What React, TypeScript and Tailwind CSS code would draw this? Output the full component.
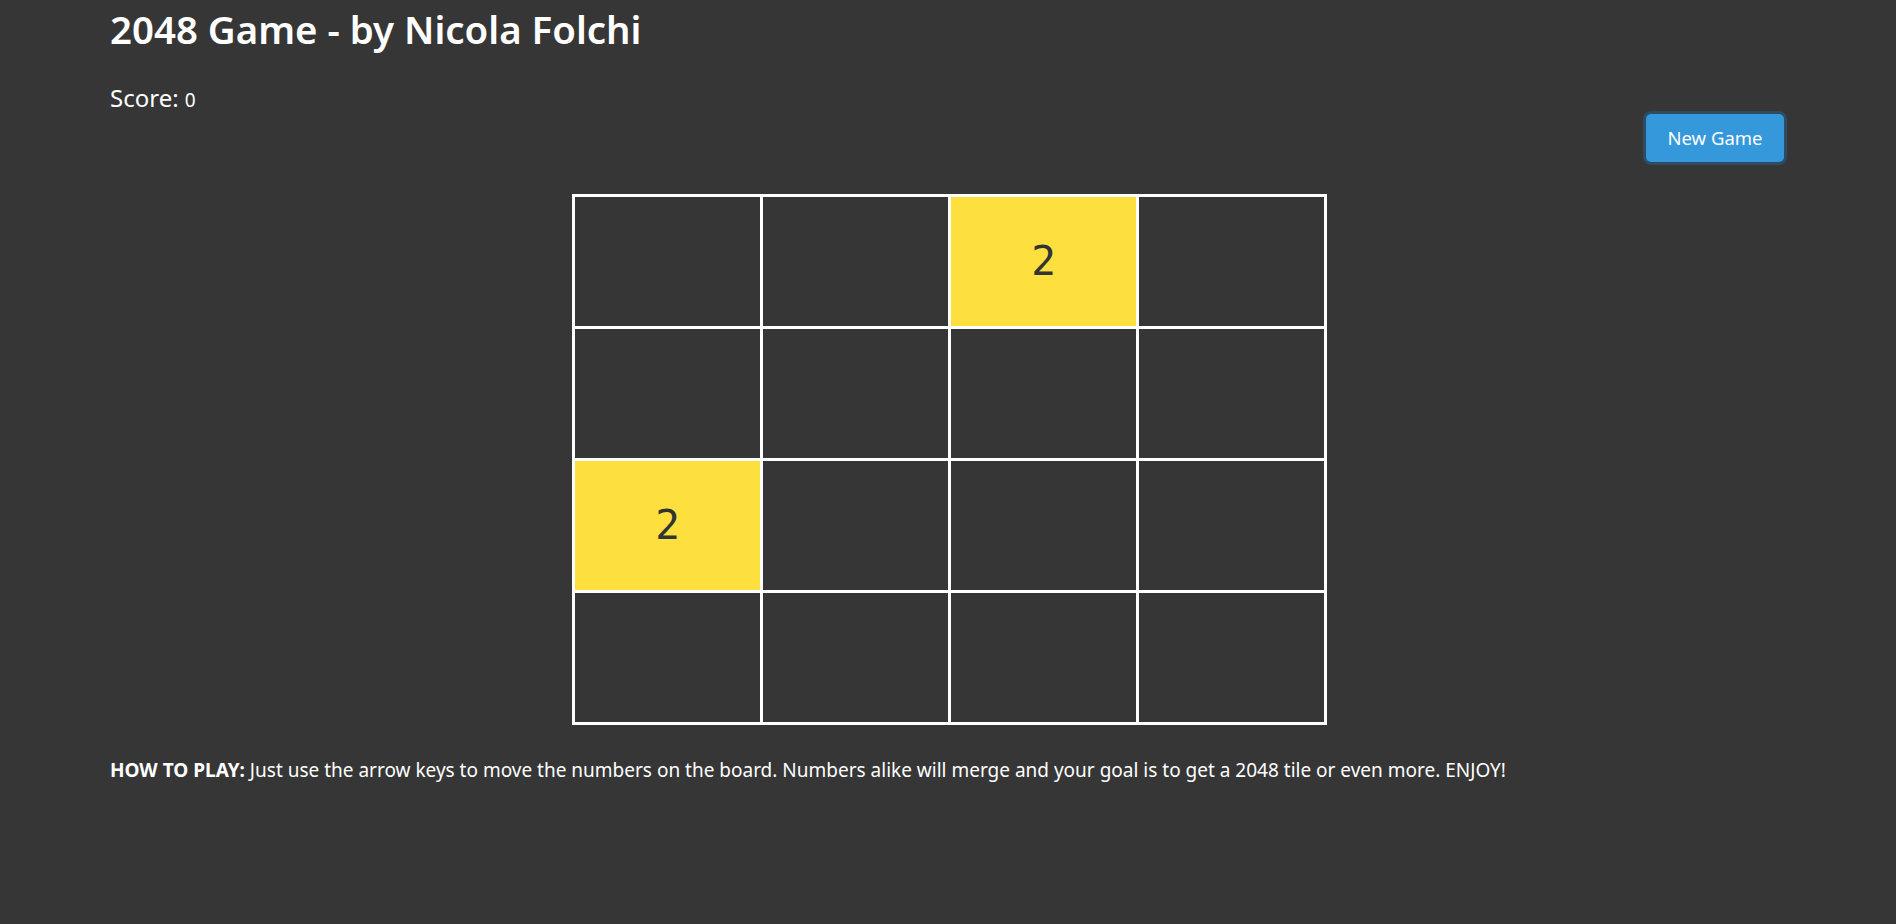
import { useState } from 'react';

type Board = number[][];

const initialBoard: Board = [
    [0, 0, 2, 0],
    [0, 0, 0, 0],
    [2, 0, 0, 0],
    [0, 0, 0, 0],
];

function Tile({ value }: { value: number }) {
    return (
        <div
            className={`flex items-center justify-center w-[185px] h-[129px] text-[41px] leading-none text-[#333333] ${value ? 'bg-[#fde03d]' : 'bg-[#363636]'}`}
            style={{ fontFamily: '"DejaVu Sans Mono", monospace' }}
        >
            {value ? value : ''}
        </div>
    );
}

export default function App() {
    const [board] = useState<Board>(initialBoard);
    const [score] = useState(0);

    return (
        <div
            className="min-h-[924px] bg-[#363636] text-white px-[110px]"
            style={{ fontFamily: '"Noto Sans", "Open Sans", sans-serif' }}
        >
            {/* Header */}
            <h1 className="text-[38.4px] font-semibold leading-[1.2] pt-[6px]">
                2048 Game - by Nicola Folchi
            </h1>
            <div className="mt-[32px] text-[24px] leading-[1.2]">
                Score: <span className="text-[19px]">{score}</span>
            </div>

            {/* Controls */}
            <div className="flex justify-end mt-[1px] pr-[2px]">
                <button className="w-[138px] h-[48px] rounded-[5px] bg-[#3498db] text-white text-[18.5px] ring-[3px] ring-[#2d4b61]">
                    New Game
                </button>
            </div>

            {/* Board */}
            <div className="flex justify-center mt-[32px] pl-[3px]">
                <div className="grid grid-cols-4 gap-[3px] p-[3px] bg-white">
                    {board.map((row, r) =>
                        row.map((v, c) => <Tile key={`${r}-${c}`} value={v} />)
                    )}
                </div>
            </div>

            {/* How to play */}
            <p className="mt-[31px] text-[19px] leading-[1.5]">
                <span className="font-bold">HOW TO PLAY:</span> Just use the arrow keys to move the numbers on the board. Numbers alike will merge and your goal is to get a 2048 tile or even more. ENJOY!
            </p>
        </div>
    );
}
